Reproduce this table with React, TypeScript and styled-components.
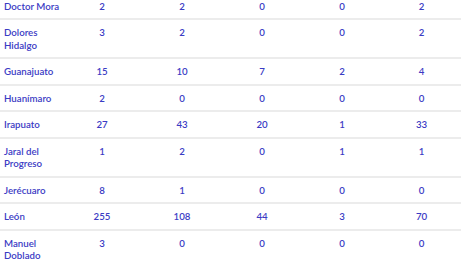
import React from 'react';
import styled, { createGlobalStyle } from 'styled-components';

type Row = { name: string; values: number[] };

const rows: Row[] = [
  { name: 'Doctor Mora', values: [2, 2, 0, 0, 2] },
  { name: 'Dolores Hidalgo', values: [3, 2, 0, 0, 2] },
  { name: 'Guanajuato', values: [15, 10, 7, 2, 4] },
  { name: 'Huanímaro', values: [2, 0, 0, 0, 0] },
  { name: 'Irapuato', values: [27, 43, 20, 1, 33] },
  { name: 'Jaral del Progreso', values: [1, 2, 0, 1, 1] },
  { name: 'Jerécuaro', values: [8, 1, 0, 0, 0] },
  { name: 'León', values: [255, 108, 44, 3, 70] },
  { name: 'Manuel Doblado', values: [3, 0, 0, 0, 0] },
];

const App: React.FC = () => {
  return (
    <>
      <GlobalStyle />
      <Viewport>
        <Table>
          {rows.map((row) => (
            <TableRow key={row.name}>
              <NameCell>{row.name}</NameCell>
              {row.values.map((v, i) => (
                <NumCell key={i}>{v}</NumCell>
              ))}
            </TableRow>
          ))}
        </Table>
      </Viewport>
    </>
  );
};

const GlobalStyle = createGlobalStyle`
  html, body {
    margin: 0;
    padding: 0;
    background: #ffffff;
    overflow: hidden;
  }
`;

const Viewport = styled.div`
  width: 461px;
  height: 268px;
  overflow: hidden;
`;

const Table = styled.div`
  width: 461px;
  margin-top: -6.5px;
  font-family: Lato, 'Open Sans', sans-serif;
  font-size: 9.7px;
  font-weight: 600;
  color: #3b3bc4;
`;

const TableRow = styled.div`
  display: grid;
  grid-template-columns: 62px repeat(4, 80px) 79px;
  border-bottom: 2px solid #ececec;
`;

const Cell = styled.div`
  padding: 6px 0;
  line-height: 12.5px;
`;

const NameCell = styled(Cell)`
  padding-left: 4px;
  text-align: left;
`;

const NumCell = styled(Cell)`
  text-align: center;
`;

export default App;
